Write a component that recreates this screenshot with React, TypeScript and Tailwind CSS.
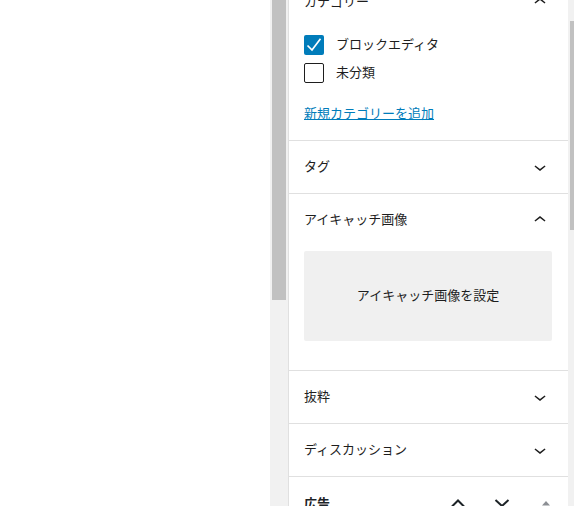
import React from "react";

const ChevronDown = () => (
  <svg width="24" height="24" viewBox="0 0 24 24" fill="#1e1e1e">
    <path d="M17.5 11.6L12 16l-5.5-4.4.9-1.2L12 14l4.6-3.6 1 1.2z" />
  </svg>
);

const ChevronUp = () => (
  <svg width="24" height="24" viewBox="0 0 24 24" fill="#1e1e1e">
    <path d="M6.5 12.4L12 8l5.5 4.4-.9 1.2L12 10l-4.6 3.6-1-1.2z" />
  </svg>
);

const PanelHeader = ({ title, open }: { title: string; open?: boolean }) => (
  <div className="flex h-[52px] items-center justify-between pl-[15px] pr-4">
    <span className="relative -top-px leading-5">{title}</span>
    {open ? <ChevronUp /> : <ChevronDown />}
  </div>
);

export default function App() {
  return (
    <div
      className="flex h-[506px] w-[574px] overflow-hidden bg-white text-[13px] text-[#1e1e1e]"
      style={{ fontFamily: '"Noto Sans CJK JP", "Noto Sans", sans-serif' }}
    >
      <div className="w-[270px] shrink-0 bg-white" />
      <div className="w-[18px] shrink-0 bg-[#f1f1f1]">
        <div className="ml-[2px] h-[300px] w-[14px] bg-[#c1c1c1]" />
      </div>
      <div className="flex w-[280px] shrink-0 flex-col border-l border-[#e0e0e0]">
        {/* Categories */}
        <div className="border-b border-[#e0e0e0]">
          <div className="mt-[-24px]">
            <PanelHeader title="カテゴリー" open />
          </div>
          <div className="pb-[17px] pl-[15px] pr-4 pt-[7px]">
            <div className="flex flex-col gap-2">
              <label className="flex h-5 items-center gap-3">
                <span className="flex h-5 w-5 items-center justify-center rounded-[2px] bg-[#007cba]">
                  <svg width="20" height="20" viewBox="0 0 20 20" fill="none" stroke="#fff" strokeWidth="1.7">
                    <path d="M3.5 10.5L8 15L16.5 3.8" />
                  </svg>
                </span>
                <span className="relative -top-px leading-5">ブロックエディタ</span>
              </label>
              <label className="flex h-5 items-center gap-3">
                <span className="h-5 w-5 rounded-[2px] border border-[#1e1e1e] bg-white" />
                <span className="relative -top-px leading-5">未分類</span>
              </label>
            </div>
            <a className="mt-5 block leading-5 text-[#007cba] underline">新規カテゴリーを追加</a>
          </div>
        </div>

        <div className="border-b border-[#e0e0e0]">
          <PanelHeader title="タグ" />
        </div>

        <div className="border-b border-[#e0e0e0]">
          <PanelHeader title="アイキャッチ画像" open />
          <div className="pb-[29px] pl-[15px] pr-4 pt-[5px]">
            <div className="flex h-[90px] items-center justify-center rounded-[2px] bg-[#f0f0f0]">
              <span className="relative -top-px leading-5">アイキャッチ画像を設定</span>
            </div>
          </div>
        </div>

        <div className="border-b border-[#e0e0e0]">
          <PanelHeader title="抜粋" />
        </div>

        <div className="border-b border-[#e0e0e0]">
          <PanelHeader title="ディスカッション" />
        </div>

        <div className="flex h-[52px] shrink-0 items-center justify-between pl-[15px]">
          <span className="font-bold leading-5 text-[#1d2327]">広告</span>
          <div className="flex h-full">
            <div className="flex w-[44px] items-center justify-center">
              <svg width="16" height="16" viewBox="0 0 16 16" fill="none" stroke="#1d2327" strokeWidth="2">
                <path d="M2 11.5L8 5.5l6 6" />
              </svg>
            </div>
            <div className="flex w-[44px] items-center justify-center">
              <svg width="16" height="16" viewBox="0 0 16 16" fill="none" stroke="#1d2327" strokeWidth="2">
                <path d="M1.5 5L8 11l6.5-6" />
              </svg>
            </div>
            <div className="flex w-[44px] items-center justify-center">
              <svg width="10" height="6" viewBox="0 0 10 6" fill="#8c8f94">
                <path d="M1 5.5L5 1l4 4.5z" />
              </svg>
            </div>
          </div>
        </div>
      </div>
      <div className="w-[6px] shrink-0 bg-[#f1f1f1]">
        <div className="ml-[2px] mt-[21px] h-[209px] w-[4px] bg-[#c1c1c1]" />
      </div>
    </div>
  );
}
